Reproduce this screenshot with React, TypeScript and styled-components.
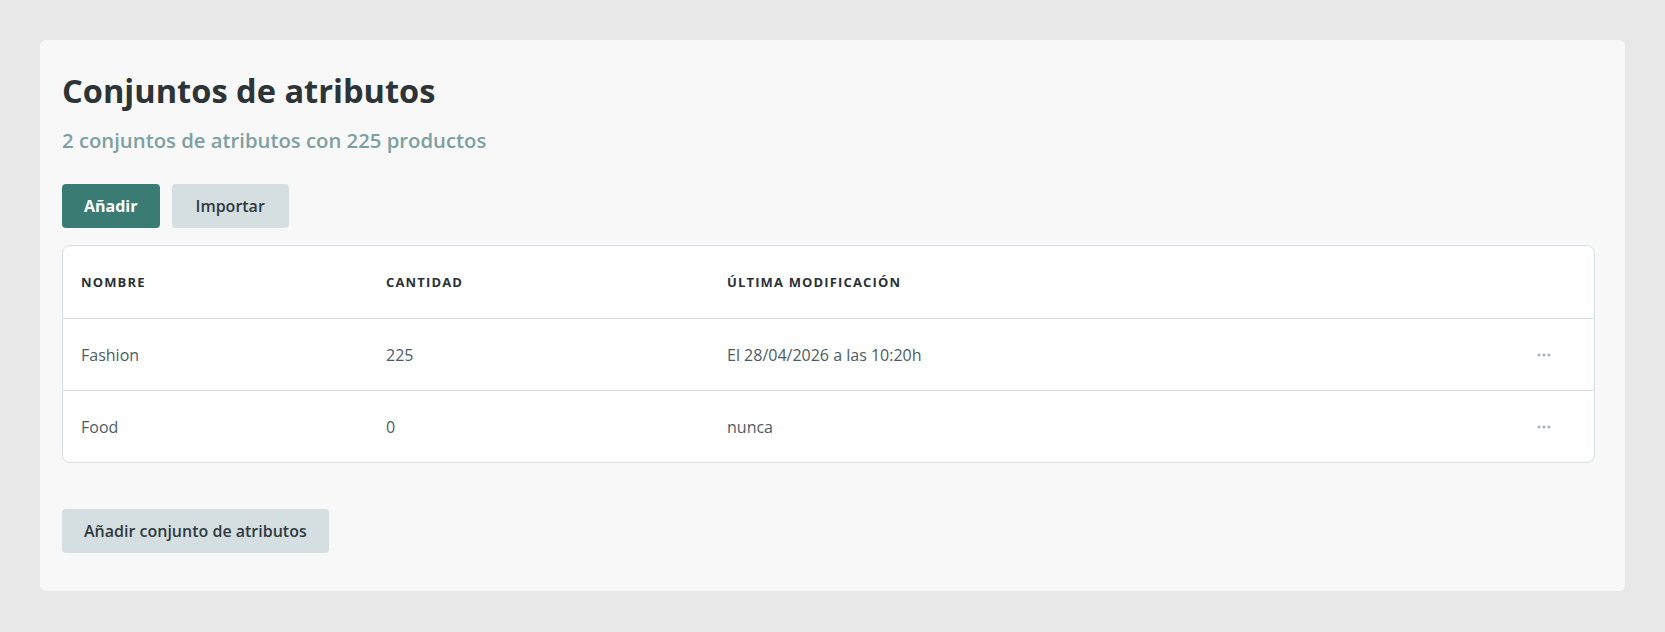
import React from 'react';
import styled, { createGlobalStyle } from 'styled-components';

// ── Global ────────────────────────────────────────────────────────────────────

const GlobalStyle = createGlobalStyle`
  html, body {
    margin: 0;
    padding: 0;
    background: #e8e8e8;
    font-family: 'Open Sans', 'Noto Sans', sans-serif;
  }
  * { box-sizing: border-box; }
`;

// ── Layout ────────────────────────────────────────────────────────────────────

const Page = styled.div`
  padding: 40px 40px 41px 40px;
  min-height: 100vh;
`;

const Card = styled.section`
  background: #f8f8f8;
  border-radius: 6px;
  padding: 30px 30px 38px 22px;
  display: flex;
  flex-direction: column;
  align-items: flex-start;
`;

const Title = styled.h1`
  margin: 0;
  font-size: 32.6px;
  line-height: 41px;
  font-weight: 700;
  color: #2c3437;
`;

const Subtitle = styled.p`
  margin: 15px 0 0;
  font-size: 20.3px;
  line-height: 28px;
  font-weight: 600;
  color: #7ea0a3;
`;

const Actions = styled.div`
  display: flex;
  gap: 12px;
  margin-top: 30px;
`;

const Button = styled.button<{ $primary?: boolean }>`
  height: 44px;
  padding: 0 22px;
  border: none;
  border-radius: 4px;
  font-family: inherit;
  font-size: 16px;
  font-weight: ${p => (p.$primary ? 700 : 600)};
  color: ${p => (p.$primary ? '#ffffff' : '#2f3a40')};
  background: ${p => (p.$primary ? '#3a7b73' : '#d5dfe1')};
  cursor: pointer;
`;

const ImportButton = styled(Button)`
  padding: 0 24px;
`;

// ── Table ─────────────────────────────────────────────────────────────────────

const Table = styled.div`
  align-self: stretch;
  margin-top: 17px;
  background: #ffffff;
  border: 1px solid #d6dfe2;
  border-radius: 8px;
  overflow: hidden;
`;

const Row = styled.div`
  display: grid;
  grid-template-columns: 305px 341px 1fr 14px;
  align-items: center;
  height: 72px;
  padding: 0 43px 0 18px;
  & + & { border-top: 1px solid #d6dfe2; }
`;

const HeadCell = styled.div`
  font-size: 13px;
  font-weight: 700;
  letter-spacing: 1.15px;
  text-transform: uppercase;
  color: #2a3137;
`;

const Cell = styled.div`
  font-size: 16px;
  color: #4c5c66;
`;

const MoreBtn = styled.button`
  display: flex;
  align-items: center;
  justify-content: center;
  width: 14px;
  height: 14px;
  padding: 0;
  border: none;
  background: none;
  cursor: pointer;
`;

const Footer = styled.div`
  margin-top: 46px;
`;

function MoreIcon() {
  return (
    <svg width="14" height="4" viewBox="0 0 14 4" fill="#a3b7c2">
      <circle cx="2" cy="2" r="1.6" />
      <circle cx="7" cy="2" r="1.6" />
      <circle cx="12" cy="2" r="1.6" />
    </svg>
  );
}

// ── Data ──────────────────────────────────────────────────────────────────────

const sets = [
  { name: 'Fashion', count: 225, modified: 'El 28/04/2026 a las 10:20h' },
  { name: 'Food', count: 0, modified: 'nunca' },
];

// ── Component ─────────────────────────────────────────────────────────────────

export default function App() {
  const total = sets.reduce((n, s) => n + s.count, 0);

  return (
    <>
      <GlobalStyle />
      <Page>
        <Card>
          <Title>Conjuntos de atributos</Title>
          <Subtitle>
            {sets.length} conjuntos de atributos con {total} productos
          </Subtitle>

          <Actions>
            <Button $primary>Añadir</Button>
            <ImportButton>Importar</ImportButton>
          </Actions>

          <Table>
            <Row>
              <HeadCell>Nombre</HeadCell>
              <HeadCell>Cantidad</HeadCell>
              <HeadCell>Última modificación</HeadCell>
              <span />
            </Row>
            {sets.map(s => (
              <Row key={s.name}>
                <Cell>{s.name}</Cell>
                <Cell>{s.count}</Cell>
                <Cell>{s.modified}</Cell>
                <MoreBtn aria-label="Más opciones">
                  <MoreIcon />
                </MoreBtn>
              </Row>
            ))}
          </Table>

          <Footer>
            <Button>Añadir conjunto de atributos</Button>
          </Footer>
        </Card>
      </Page>
    </>
  );
}
